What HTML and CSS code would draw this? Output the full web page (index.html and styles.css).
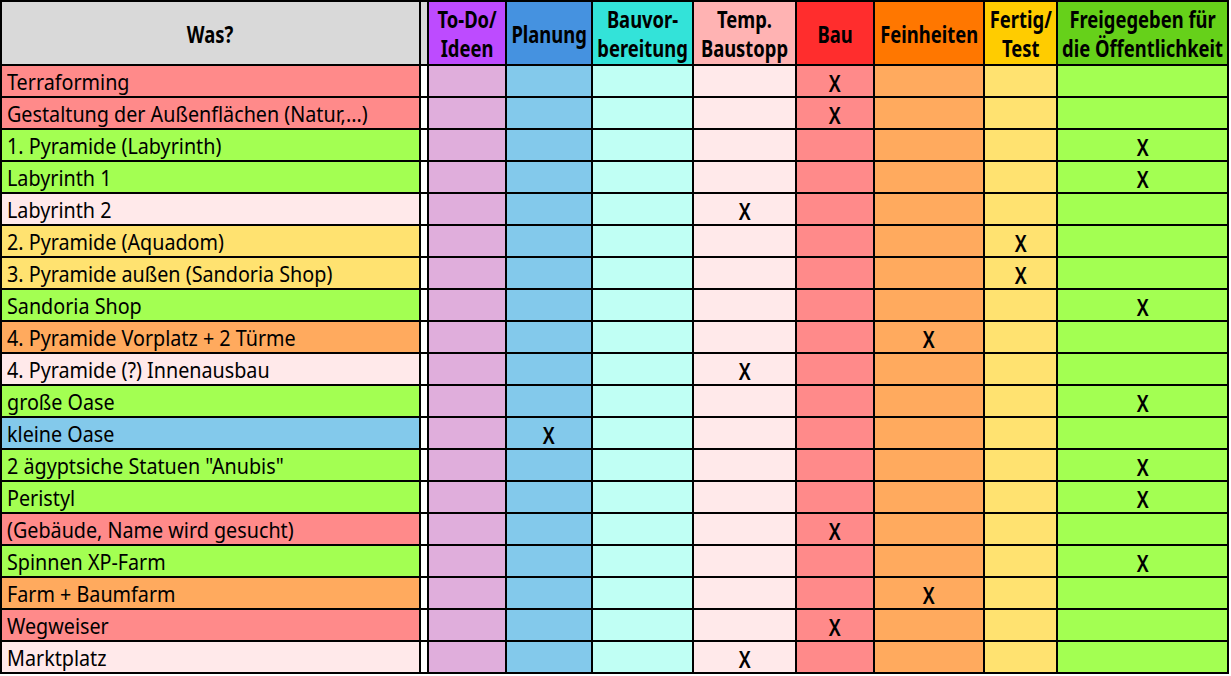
FILE: index.html
```html
<!DOCTYPE html>
<html lang="de">
<head>
<meta charset="utf-8">
<title>Baufortschritt</title>
<link rel="stylesheet" href="styles.css">
</head>
<body>
<div class="sheet">
  <div class="h h-was"><span class="ht">Was?</span></div>
  <div class="h h-gap"></div>
  <div class="h h-todo"><span class="ht">To-Do/<br>Ideen</span></div>
  <div class="h h-plan"><span class="ht">Planung</span></div>
  <div class="h h-vor"><span class="ht">Bauvor-<br>bereitung</span></div>
  <div class="h h-temp"><span class="ht">Temp.<br>Baustopp</span></div>
  <div class="h h-bau"><span class="ht">Bau</span></div>
  <div class="h h-fein"><span class="ht">Feinheiten</span></div>
  <div class="h h-fert"><span class="ht">Fertig/<br>Test</span></div>
  <div class="h h-frei"><span class="ht">Freigegeben für<br>die Öffentlichkeit</span></div>

  <div class="lbl s-bau"><span class="lt">Terraforming</span></div><div class="gap"></div>
  <div class="c todo"></div><div class="c plan"></div><div class="c vor"></div><div class="c temp"></div><div class="c bau"><span class="x">X</span></div><div class="c fein"></div><div class="c fert"></div><div class="c frei"></div>

  <div class="lbl s-bau"><span class="lt">Gestaltung der Außenflächen (Natur,...)</span></div><div class="gap"></div>
  <div class="c todo"></div><div class="c plan"></div><div class="c vor"></div><div class="c temp"></div><div class="c bau"><span class="x">X</span></div><div class="c fein"></div><div class="c fert"></div><div class="c frei"></div>

  <div class="lbl s-frei"><span class="lt">1. Pyramide (Labyrinth)</span></div><div class="gap"></div>
  <div class="c todo"></div><div class="c plan"></div><div class="c vor"></div><div class="c temp"></div><div class="c bau"></div><div class="c fein"></div><div class="c fert"></div><div class="c frei"><span class="x">X</span></div>

  <div class="lbl s-frei"><span class="lt">Labyrinth 1</span></div><div class="gap"></div>
  <div class="c todo"></div><div class="c plan"></div><div class="c vor"></div><div class="c temp"></div><div class="c bau"></div><div class="c fein"></div><div class="c fert"></div><div class="c frei"><span class="x">X</span></div>

  <div class="lbl s-temp"><span class="lt">Labyrinth 2</span></div><div class="gap"></div>
  <div class="c todo"></div><div class="c plan"></div><div class="c vor"></div><div class="c temp"><span class="x">X</span></div><div class="c bau"></div><div class="c fein"></div><div class="c fert"></div><div class="c frei"></div>

  <div class="lbl s-fert"><span class="lt">2. Pyramide (Aquadom)</span></div><div class="gap"></div>
  <div class="c todo"></div><div class="c plan"></div><div class="c vor"></div><div class="c temp"></div><div class="c bau"></div><div class="c fein"></div><div class="c fert"><span class="x">X</span></div><div class="c frei"></div>

  <div class="lbl s-fert"><span class="lt">3. Pyramide außen (Sandoria Shop)</span></div><div class="gap"></div>
  <div class="c todo"></div><div class="c plan"></div><div class="c vor"></div><div class="c temp"></div><div class="c bau"></div><div class="c fein"></div><div class="c fert"><span class="x">X</span></div><div class="c frei"></div>

  <div class="lbl s-frei"><span class="lt">Sandoria Shop</span></div><div class="gap"></div>
  <div class="c todo"></div><div class="c plan"></div><div class="c vor"></div><div class="c temp"></div><div class="c bau"></div><div class="c fein"></div><div class="c fert"></div><div class="c frei"><span class="x">X</span></div>

  <div class="lbl s-fein"><span class="lt">4. Pyramide Vorplatz + 2 Türme</span></div><div class="gap"></div>
  <div class="c todo"></div><div class="c plan"></div><div class="c vor"></div><div class="c temp"></div><div class="c bau"></div><div class="c fein"><span class="x">X</span></div><div class="c fert"></div><div class="c frei"></div>

  <div class="lbl s-temp"><span class="lt">4. Pyramide (?) Innenausbau</span></div><div class="gap"></div>
  <div class="c todo"></div><div class="c plan"></div><div class="c vor"></div><div class="c temp"><span class="x">X</span></div><div class="c bau"></div><div class="c fein"></div><div class="c fert"></div><div class="c frei"></div>

  <div class="lbl s-frei"><span class="lt">große Oase</span></div><div class="gap"></div>
  <div class="c todo"></div><div class="c plan"></div><div class="c vor"></div><div class="c temp"></div><div class="c bau"></div><div class="c fein"></div><div class="c fert"></div><div class="c frei"><span class="x">X</span></div>

  <div class="lbl s-plan"><span class="lt">kleine Oase</span></div><div class="gap"></div>
  <div class="c todo"></div><div class="c plan"><span class="x">X</span></div><div class="c vor"></div><div class="c temp"></div><div class="c bau"></div><div class="c fein"></div><div class="c fert"></div><div class="c frei"></div>

  <div class="lbl s-frei"><span class="lt">2 ägyptsiche Statuen "Anubis"</span></div><div class="gap"></div>
  <div class="c todo"></div><div class="c plan"></div><div class="c vor"></div><div class="c temp"></div><div class="c bau"></div><div class="c fein"></div><div class="c fert"></div><div class="c frei"><span class="x">X</span></div>

  <div class="lbl s-frei"><span class="lt">Peristyl</span></div><div class="gap"></div>
  <div class="c todo"></div><div class="c plan"></div><div class="c vor"></div><div class="c temp"></div><div class="c bau"></div><div class="c fein"></div><div class="c fert"></div><div class="c frei"><span class="x">X</span></div>

  <div class="lbl s-bau"><span class="lt">(Gebäude, Name wird gesucht)</span></div><div class="gap"></div>
  <div class="c todo"></div><div class="c plan"></div><div class="c vor"></div><div class="c temp"></div><div class="c bau"><span class="x">X</span></div><div class="c fein"></div><div class="c fert"></div><div class="c frei"></div>

  <div class="lbl s-frei"><span class="lt">Spinnen XP-Farm</span></div><div class="gap"></div>
  <div class="c todo"></div><div class="c plan"></div><div class="c vor"></div><div class="c temp"></div><div class="c bau"></div><div class="c fein"></div><div class="c fert"></div><div class="c frei"><span class="x">X</span></div>

  <div class="lbl s-fein"><span class="lt">Farm + Baumfarm</span></div><div class="gap"></div>
  <div class="c todo"></div><div class="c plan"></div><div class="c vor"></div><div class="c temp"></div><div class="c bau"></div><div class="c fein"><span class="x">X</span></div><div class="c fert"></div><div class="c frei"></div>

  <div class="lbl s-bau"><span class="lt">Wegweiser</span></div><div class="gap"></div>
  <div class="c todo"></div><div class="c plan"></div><div class="c vor"></div><div class="c temp"></div><div class="c bau"><span class="x">X</span></div><div class="c fein"></div><div class="c fert"></div><div class="c frei"></div>

  <div class="lbl s-temp"><span class="lt">Marktplatz</span></div><div class="gap"></div>
  <div class="c todo"></div><div class="c plan"></div><div class="c vor"></div><div class="c temp"><span class="x">X</span></div><div class="c bau"></div><div class="c fein"></div><div class="c fert"></div><div class="c frei"></div>
</div>
</body>
</html>
```
FILE: styles.css
```css
body{margin:0;background:#fff;}
.sheet{display:grid;grid-template-columns:417px 6px 76px 84px 99px 101px 76px 108px 71px 169px;grid-template-rows:62px;grid-auto-rows:30px;gap:2px;padding:2px;background:#000;width:1225px;font-family:"Noto Sans","DejaVu Sans",sans-serif;color:#000;}
.h{display:flex;align-items:center;justify-content:center;text-align:center;font-weight:bold;font-size:23px;line-height:29px;}
.ht{display:inline-block;white-space:nowrap;transform:scaleX(0.8);transform-origin:center;padding-top:2px;}
.h-was{background:#d9d9d9;}
.h-gap{background:#d9d9d9;}
.h-todo{background:#bd4bff;}
.h-plan{background:#4592e0;}
.h-vor{background:#33e3d9;}
.h-temp{background:#ffb3b3;}
.h-bau{background:#ff2d2d;}
.h-fein{background:#ff7700;}
.h-fert{background:#ffcc00;}
.h-frei{background:#66d11a;}
.gap{background:#fff;}
.lbl{display:flex;align-items:center;padding:2px 0 0 5px;font-size:21px;white-space:nowrap;}
.lt{display:inline-block;transform:scaleX(0.94);transform-origin:left center;}
.c{display:flex;align-items:center;justify-content:center;padding-top:3px;}
.x{display:inline-block;font-size:24px;font-weight:600;transform:scaleX(0.78);}
.todo{background:#e0aedc;}
.plan,.s-plan{background:#83c9eb;}
.vor{background:#c0fff4;}
.temp,.s-temp{background:#ffe9ea;}
.bau,.s-bau{background:#ff8a8a;}
.fein,.s-fein{background:#ffaa5e;}
.fert,.s-fert{background:#ffe270;}
.frei,.s-frei{background:#a3ff52;}
```
